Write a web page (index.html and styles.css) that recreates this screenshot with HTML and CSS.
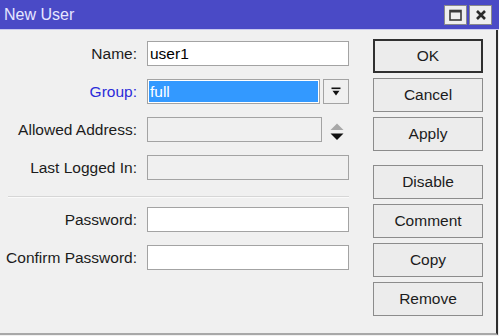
FILE: index.html
```html
<!DOCTYPE html>
<html lang="en">
<head>
    <meta charset="UTF-8">
    <meta name="viewport" content="width=device-width, initial-scale=1.0">
    <title>New User</title>
    <link rel="stylesheet" href="styles.css">
</head>
<body>
    <div class="window">
        <div class="title-bar">
            <span class="title">New User</span>
            <div class="title-buttons">
                <span class="tb-btn">
                    <svg width="13" height="12" viewBox="0 0 13 12">
                        <rect x="1" y="1.5" width="11" height="9.5" fill="none" stroke="#3a3a3a" stroke-width="1.6"/>
                        <rect x="1" y="1" width="11" height="2.5" fill="#3a3a3a"/>
                    </svg>
                </span>
                <span class="tb-btn">
                    <svg width="12" height="12" viewBox="0 0 12 12">
                        <path d="M2 2 L10 10 M10 2 L2 10" stroke="#2a2a2a" stroke-width="2.6"/>
                    </svg>
                </span>
            </div>
        </div>

        <div class="window-body">
            <div class="form">
                <div class="label">Name:</div>
                <div class="field"><div class="box">user1</div></div>

                <div class="label label-link">Group:</div>
                <div class="field">
                    <div class="box box-selected"><span class="selected-text">full</span></div>
                    <div class="drop-btn">
                        <svg width="10" height="10" viewBox="0 0 10 10">
                            <rect x="0.5" y="0.5" width="9" height="1.6" fill="#111"/>
                            <path d="M1.5 3.8 H8.5 L5 8.5 Z" fill="#111"/>
                        </svg>
                    </div>
                </div>

                <div class="label">Allowed Address:</div>
                <div class="field">
                    <div class="box box-disabled box-narrow"></div>
                    <div class="spin">
                        <svg width="14" height="18" viewBox="0 0 14 18">
                            <path d="M0.5 7 L7 0.5 L13.5 7 Z" fill="#a8a8a8"/>
                            <path d="M0.5 10.5 H13.5 L7 17 Z" fill="#111"/>
                        </svg>
                    </div>
                </div>

                <div class="label">Last Logged In:</div>
                <div class="field"><div class="box box-disabled"></div></div>

                <div class="separator"></div>

                <div class="label">Password:</div>
                <div class="field"><div class="box"></div></div>

                <div class="label">Confirm Password:</div>
                <div class="field"><div class="box"></div></div>
            </div>

            <div class="buttons">
                <div class="btn btn-default">OK</div>
                <div class="btn">Cancel</div>
                <div class="btn">Apply</div>
                <div class="btn btn-group-start">Disable</div>
                <div class="btn">Comment</div>
                <div class="btn">Copy</div>
                <div class="btn">Remove</div>
            </div>
        </div>
    </div>
</body>
</html>
```

FILE: styles.css
```css
body {
    margin: 0;
    background: #f0f0f0;
    font-family: "Liberation Sans", Arial, sans-serif;
    font-size: 15.5px;
    color: #1c1c1c;
}
.window {
    width: 499px;
    height: 336px;
    overflow: hidden;
}
.title-bar {
    height: 29px;
    background-color: #4a4ac6;
    border-bottom: 1px solid #c9c9ee;
    display: flex;
    justify-content: space-between;
    align-items: center;
    padding: 0 7px 0 4px;
}
.title {
    color: #e6e6ff;
    font-size: 16px;
}
.title-buttons {
    display: flex;
    gap: 2px;
}
.tb-btn {
    width: 21px;
    height: 18px;
    background: #eeeeee;
    border: 1px solid #8a8a8a;
    display: flex;
    align-items: center;
    justify-content: center;
}
.window-body {
    width: 496px;
    height: 303px;
    border-right: 2px solid #2e2e2e;
    border-bottom: 2px solid #a8a8a8;
    display: flex;
}
.form {
    display: grid;
    grid-template-columns: 137px 202px;
    column-gap: 10px;
    row-gap: 13px;
    padding-top: 11px;
    width: 349px;
    align-content: start;
}
.label {
    text-align: right;
    line-height: 25px;
    white-space: nowrap;
}
.label-link {
    color: #2b2bd9;
}
.field {
    display: flex;
    gap: 3px;
    height: 25px;
}
.box {
    flex: 1;
    box-sizing: border-box;
    height: 25px;
    background: #fff;
    border: 1px solid #a3a3a3;
    line-height: 23px;
    padding-left: 2px;
    color: #000;
}
.box-disabled {
    background: #f0f0f0;
}
.box-narrow {
    flex: 0 0 175px;
}
.box-selected {
    background: #3399ff;
    box-shadow: inset 0 0 0 1px #fff;
}
.selected-text {
    color: #fff;
}
.drop-btn {
    width: 26px;
    height: 25px;
    box-sizing: border-box;
    border: 1px solid #a3a3a3;
    background: #f0f0f0;
    display: flex;
    align-items: center;
    justify-content: center;
}
.spin {
    flex: 1;
    display: flex;
    align-items: center;
    justify-content: center;
    padding-top: 4px;
}
.separator {
    grid-column: 1 / 3;
    height: 1px;
    margin: 3px 0 -4px 8px;
    background: #d6d6d6;
    border-bottom: 1px solid #fafafa;
}
.buttons {
    margin-left: 24px;
    padding-top: 9px;
    display: flex;
    flex-direction: column;
    gap: 5px;
}
.btn {
    width: 110px;
    height: 34px;
    box-sizing: border-box;
    border: 1px solid #8c8c8c;
    background: #ececec;
    display: flex;
    align-items: center;
    justify-content: center;
    color: #1c1c1c;
}
.btn-default {
    border: 2px solid #303030;
}
.btn-group-start {
    margin-top: 9px;
}
```
